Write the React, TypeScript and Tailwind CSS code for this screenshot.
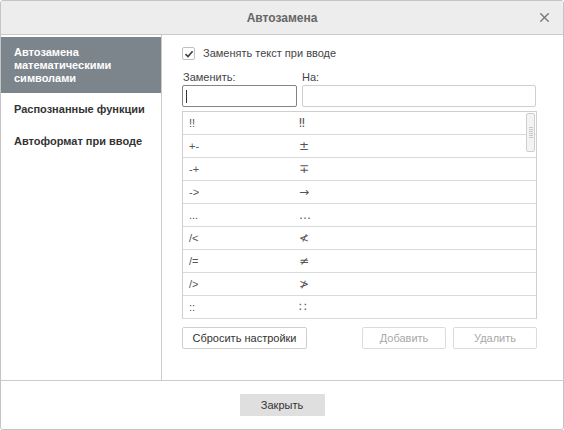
import { X } from "lucide-react";

const rows: [string, string][] = [
  ["!!", "‼"],
  ["+-", "±"],
  ["-+", "∓"],
  ["->", "→"],
  ["...", "…"],
  ["/<", "≮"],
  ["/=", "≠"],
  ["/>", "≯"],
  ["::", "∷"],
];

const App = () => {
  return (
    <div className="w-[564px] h-[430px] bg-white border border-[#c4c4c4] rounded-[3px] flex flex-col overflow-hidden font-['Liberation_Sans',Arial,sans-serif] text-[11px] text-[#444]">
      <div className="h-[34px] shrink-0 bg-[#ededed] border-b border-[#cbcbcb] relative flex items-center justify-center">
        <span className="text-[12px] font-bold text-[#666]">Автозамена</span>
        <X className="absolute right-[11px] top-[9px] w-[15px] h-[15px] text-[#7a7a7a]" strokeWidth={2.2} />
      </div>

      <div className="flex-1 flex min-h-0">
        <div className="w-[161px] shrink-0 border-r border-[#cbcbcb] pt-[2px] font-bold">
          <div className="h-[56px] bg-[#7d858c] text-white px-[13px] flex flex-col justify-center leading-[13px]">
            <span>Автозамена</span>
            <span>математическими</span>
            <span>символами</span>
          </div>
          <div className="h-[32px] px-[13px] flex items-center text-[#333]">Распознанные функции</div>
          <div className="h-[32px] px-[13px] flex items-center text-[#333]">Автоформат при вводе</div>
        </div>

        <div className="flex-1 pl-[20px] pt-[12px] w-[355px]">
          <div className="flex items-center gap-[8px] h-[13px]">
            <div className="w-[13px] h-[13px] border border-[#c0c0c0] rounded-[2px] flex items-center justify-center">
              <svg viewBox="0 0 10 10" className="w-[10px] h-[10px]">
                <polyline points="1.5,5.2 4,7.6 8.6,2.2" fill="none" stroke="#444" strokeWidth="1.7" />
              </svg>
            </div>
            <span>Заменять текст при вводе</span>
          </div>

          <div className="flex gap-[5px] mt-[9px] w-[355px]">
            <div className="w-[115px] flex flex-col">
              <span className="h-[16px] leading-[16px] pl-[1px]">Заменить:</span>
              <div className="h-[22px] border border-[#848484] rounded-[2px] flex items-center pl-[3px]">
                <div className="w-[1px] h-[13px] bg-[#333]" />
              </div>
            </div>
            <div className="w-[234px] flex flex-col">
              <span className="h-[16px] leading-[16px]">На:</span>
              <div className="h-[22px] border border-[#cfcfcf] rounded-[2px]" />
            </div>
          </div>

          <div className="mt-[4px] w-[355px] h-[208px] border border-[#cfcfcf] relative">
            {rows.map(([a, b]) => (
              <div key={a} className="h-[23px] border-b border-[#dadada] flex items-center last:border-b-0">
                <span className="w-[116px] pl-[6px] text-[#555]">{a}</span>
                <span className="text-[#555] text-[12px] font-['DejaVu_Sans',sans-serif]">{b}</span>
              </div>
            ))}
            <div className="absolute right-[1px] top-[1px] w-[9px] h-[39px] bg-[#f3f3f3] border border-[#cfcfcf] rounded-[2px] flex flex-col items-center justify-center gap-[1px]">
              {[0, 1, 2, 3, 4, 5].map((i) => (
                <div key={i} className="w-[4px] h-[1px] bg-[#c8c8c8]" />
              ))}
            </div>
          </div>

          <div className="flex mt-[8px] w-[355px]">
            <div className="w-[125px] h-[22px] border border-[#cfcfcf] rounded-[2px] flex items-center justify-center text-[#333]">
              Сбросить настройки
            </div>
            <div className="ml-auto flex gap-[7px]">
              <div className="w-[84px] h-[22px] border border-[#dcdcdc] rounded-[2px] flex items-center justify-center text-[#a8a8a8]">
                Добавить
              </div>
              <div className="w-[84px] h-[22px] border border-[#dcdcdc] rounded-[2px] flex items-center justify-center text-[#a8a8a8]">
                Удалить
              </div>
            </div>
          </div>
        </div>
      </div>

      <div className="h-[49px] shrink-0 border-t border-[#cbcbcb] flex items-center justify-center">
        <div className="w-[85px] h-[22px] bg-[#dfdfdf] rounded-[1px] flex items-center justify-center text-[#333]">
          Закрыть
        </div>
      </div>
    </div>
  );
};

export default App;
